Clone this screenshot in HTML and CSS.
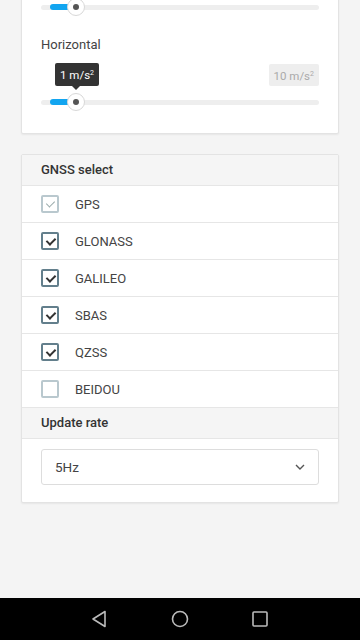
FILE: index.html
```html
<!DOCTYPE html>
<html lang="en">
  <head>
    <meta charset="UTF-8" />
    <meta name="viewport" content="width=device-width, initial-scale=1.0" />
    <title>GNSS settings</title>
    <link rel="stylesheet" href="styles.css">
  </head>
  <body>
    <div class="screen">
      <div class="content">
        <div class="card card-accel">
          <div class="slider">
            <div class="track"><div class="fill"></div></div>
            <div class="thumb"></div>
          </div>

          <div class="label">Horizontal</div>
          <div class="range-row">
            <span class="tip">1 m/s<sup>2</sup></span>
            <span class="max">10 m/s<sup>2</sup></span>
          </div>
          <div class="slider">
            <div class="track"><div class="fill"></div></div>
            <div class="thumb"></div>
          </div>
        </div>

        <div class="card">
          <div class="card-head">GNSS select</div>
          <ul class="checks">
            <li class="disabled"><span class="box checked"></span>GPS</li>
            <li><span class="box checked"></span>GLONASS</li>
            <li><span class="box checked"></span>GALILEO</li>
            <li><span class="box checked"></span>SBAS</li>
            <li><span class="box checked"></span>QZSS</li>
            <li class="disabled"><span class="box"></span>BEIDOU</li>
          </ul>
          <div class="card-head">Update rate</div>
          <div class="select-wrap">
            <div class="select">
              <span>5Hz</span>
              <svg width="10" height="6" viewBox="0 0 10 6"><path d="M1 1l4 4 4-4" fill="none" stroke="#555" stroke-width="1.4"/></svg>
            </div>
          </div>
        </div>
      </div>

      <div class="navbar">
        <svg width="20" height="20" viewBox="0 0 20 20"><path d="M15 2.5v15L3 10z" fill="none" stroke="#bbb" stroke-width="1.6" stroke-linejoin="round"/></svg>
        <svg width="20" height="20" viewBox="0 0 20 20"><circle cx="10" cy="10" r="7.5" fill="none" stroke="#bbb" stroke-width="1.6"/></svg>
        <svg width="20" height="20" viewBox="0 0 20 20"><rect x="3" y="3" width="14" height="14" rx="1" fill="none" stroke="#bbb" stroke-width="1.6"/></svg>
      </div>
    </div>
  </body>
</html>
```

FILE: styles.css
```css
body {
  margin: 0;
  font-family: Roboto, "Noto Sans", sans-serif;
  background: #f4f4f4;
  color: #444;
}
.screen {
  height: 640px;
  display: flex;
  flex-direction: column;
  overflow: hidden;
}
.content {
  flex: 1;
  overflow: hidden;
  padding: 0 21px;
}
.card {
  background: #fff;
  border: 1px solid #e3e3e3;
  border-radius: 2px;
  box-shadow: 0 1px 2px rgba(0, 0, 0, 0.06);
  margin-bottom: 20px;
}
.card-accel {
  margin-top: -32px;
  padding: 29px 19px 22px;
}
.slider {
  position: relative;
  height: 18px;
  display: flex;
  align-items: center;
}
.track {
  width: 100%;
  height: 5px;
  border-radius: 3px;
  background: #eee;
}
.fill {
  margin-left: 9px;
  width: 26px;
  height: 6px;
  margin-top: -0.5px;
  border-radius: 3px;
  background: #12a5f0;
}
.thumb {
  position: absolute;
  left: 26px;
  top: 0;
  width: 16px;
  height: 16px;
  border: 1px solid #d8d8d8;
  border-radius: 50%;
  background: #fff;
}
.thumb::after {
  content: "";
  position: absolute;
  left: 5px;
  top: 5px;
  width: 6px;
  height: 6px;
  border-radius: 50%;
  background: #555;
}
.label {
  margin-top: 21px;
  font-size: 13px;
  line-height: 16px;
  color: #444;
}
.range-row {
  margin-top: 10px;
  margin-bottom: 7px;
  display: flex;
  justify-content: space-between;
  align-items: center;
}
.range-row sup {
  font-size: 7px;
  vertical-align: 4px;
}
.tip {
  position: relative;
  margin-left: 14px;
  background: #333;
  color: #fff;
  font-size: 11.5px;
  line-height: 21px;
  padding: 0 5px;
  border-radius: 2px;
}
.tip::after {
  content: "";
  position: absolute;
  left: 17px;
  bottom: -4px;
  border: 4px solid transparent;
  border-bottom: none;
  border-top-color: #333;
}
.max {
  background: #eee;
  color: #aaa;
  font-size: 11.5px;
  line-height: 20px;
  padding: 0 5px;
  border-radius: 2px;
}
.card-head {
  background: #f5f5f5;
  border-bottom: 1px solid #e6e6e6;
  padding: 0 19px;
  font-size: 13px;
  font-weight: 500;
  line-height: 30px;
  color: #333;
}
.checks {
  list-style: none;
  margin: 0;
  padding: 0;
}
.checks li {
  display: flex;
  align-items: center;
  gap: 16px;
  height: 36px;
  padding: 0 19px;
  border-bottom: 1px solid #e6e6e6;
  font-size: 13px;
  color: #444;
}
.box {
  position: relative;
  box-sizing: border-box;
  width: 18px;
  height: 18px;
  border: 2px solid #637f8c;
  border-radius: 2px;
}
.box.checked::after {
  content: "";
  position: absolute;
  left: 4.5px;
  top: 1.5px;
  width: 4px;
  height: 7px;
  border: solid #333;
  border-width: 0 2px 2px 0;
  transform: rotate(45deg);
}
.disabled .box {
  border-color: #b9c8ce;
}
.disabled .box.checked::after {
  border-width: 0 1.5px 1.5px 0;
  border-color: #9aa;
}
.select-wrap {
  padding: 10px 19px 17px;
}
.select {
  height: 34px;
  border: 1px solid #ddd;
  border-radius: 3px;
  display: flex;
  align-items: center;
  justify-content: space-between;
  padding: 0 13px 0 13px;
  font-size: 13.5px;
  color: #444;
}
.navbar {
  height: 42px;
  background: #000;
  display: flex;
  justify-content: center;
  align-items: center;
  gap: 60px;
}
```
